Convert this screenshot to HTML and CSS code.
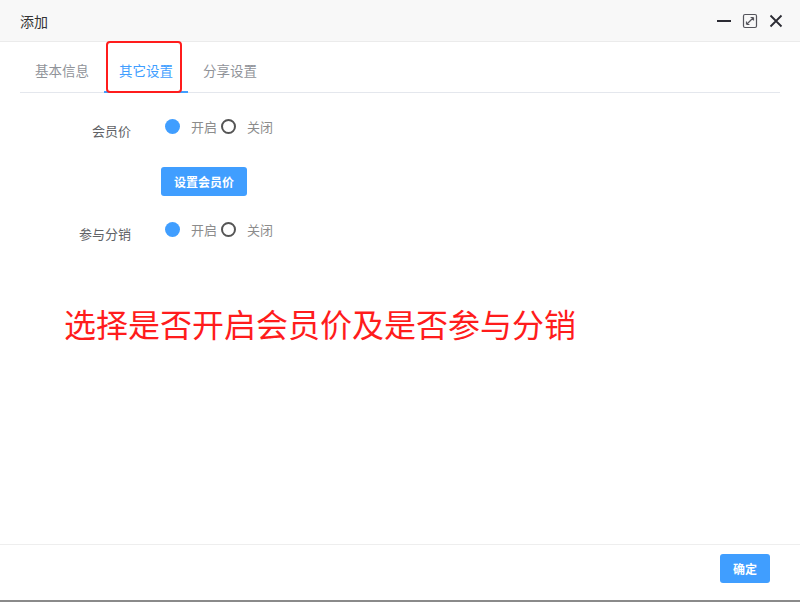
FILE: index.html
```html
<!DOCTYPE html>
<html lang="zh">
<head>
<meta charset="utf-8">
<title>添加</title>
<link rel="stylesheet" href="styles.css">
</head>
<body>
<div class="dialog">
  <div class="header">
    <span class="title">添加</span>
    <div class="tools">
      <svg class="ico" width="16" height="16" viewBox="0 0 16 16"><rect x="1" y="7" width="14" height="2" fill="#2b2b33"/></svg>
      <svg class="ico" width="16" height="16" viewBox="0 0 16 16"><rect x="1.5" y="1.5" width="13" height="13" rx="1.5" fill="none" stroke="#55555c" stroke-width="1.2"/><path d="M4.5 11.5 L11.5 4.5 M4.5 11.5 L4.5 8.6 M4.5 11.5 L7.4 11.5 M11.5 4.5 L8.6 4.5 M11.5 4.5 L11.5 7.4" fill="none" stroke="#55555c" stroke-width="1.2"/></svg>
      <svg class="ico" width="16" height="16" viewBox="0 0 16 16"><path d="M2.5 2.5 L13.5 13.5 M13.5 2.5 L2.5 13.5" stroke="#2b2b33" stroke-width="1.8"/></svg>
    </div>
  </div>
  <div class="body">
    <div class="tabs">
      <div class="tab">基本信息</div>
      <div class="tab active">其它设置</div>
      <div class="tab">分享设置</div>
      <div class="mark"></div>
    </div>
    <div class="form">
      <div class="row">
        <div class="label">会员价</div>
        <div class="radios">
          <span class="dot on"></span><span class="rtext">开启</span>
          <span class="dot off"></span><span class="rtext">关闭</span>
        </div>
      </div>
      <div class="row btnrow">
        <div class="label"></div>
        <button class="btn">设置会员价</button>
      </div>
      <div class="row">
        <div class="label">参与分销</div>
        <div class="radios">
          <span class="dot on"></span><span class="rtext">开启</span>
          <span class="dot off"></span><span class="rtext">关闭</span>
        </div>
      </div>
    </div>
    <div class="note">选择是否开启会员价及是否参与分销</div>
  </div>
  <div class="footer">
    <button class="btn ok">确定</button>
  </div>
</div>
</body>
</html>
```

FILE: styles.css
```css
* { box-sizing: border-box; }
html, body { margin: 0; padding: 0; }
body {
  width: 800px;
  height: 602px;
  overflow: hidden;
  background: #fff;
  font-family: "Noto Sans CJK SC", "Noto Sans", sans-serif;
}
.dialog {
  height: 602px;
  display: flex;
  flex-direction: column;
  border-bottom: 2px solid #8a8a8a;
}
.header {
  height: 42px;
  flex: none;
  background: #f8f8f8;
  border-bottom: 1px solid #ebebeb;
  display: flex;
  align-items: center;
  justify-content: space-between;
  padding: 0 16px 0 20px;
}
.title {
  font-size: 14px;
  color: #333;
}
.tools {
  display: flex;
  gap: 10px;
  align-items: center;
  padding-top: 1px;
}
.ico { display: block; }
.body {
  flex: 1;
  padding: 0 20px;
}
.tabs {
  position: relative;
  display: flex;
  margin-top: 9px;
  border-bottom: 1px solid #e4e7ed;
  height: 42px;
}
.tab {
  width: 84px;
  height: 41px;
  line-height: 39px;
  text-align: center;
  font-size: 13.5px;
  color: #909399;
}
.tab.active {
  color: #409eff;
  border-bottom: 2px solid #409eff;
  height: 42px;
}
.mark {
  position: absolute;
  left: 86px;
  top: -10px;
  width: 76px;
  height: 52px;
  border: 2px solid #ff1c1c;
  border-radius: 4px;
}
.form {
  padding-top: 18px;
  display: flex;
  flex-direction: column;
}
.row {
  display: flex;
  align-items: flex-start;
}
.row + .row { margin-top: 16px; }
.row.btnrow + .row { margin-top: 18px; }
.label {
  width: 123px;
  flex: none;
  text-align: right;
  padding-right: 12px;
  font-size: 13px;
  line-height: 40px;
  color: #606266;
}
.btnrow .label { width: 141px; line-height: 29px; }
.radios {
  display: flex;
  align-items: center;
  height: 30px;
  padding-left: 22px;
}
.dot {
  width: 15px;
  height: 15px;
  border-radius: 50%;
  flex: none;
}
.dot.on { background: #409eff; }
.dot.off { border: 2px solid #555; margin-left: 4px; }
.rtext {
  font-size: 13px;
  color: #8c8c8c;
  margin-left: 11px;
}
.btn {
  font-family: inherit;
  border: none;
  background: #409eff;
  color: #fff;
  font-size: 12px;
  font-weight: bold;
  height: 29px;
  padding: 0 13px;
  border-radius: 3px;
}
.note {
  margin-top: 49px;
  padding-left: 44px;
  font-size: 32px;
  line-height: 40px;
  color: #ff1c1c;
}
.footer {
  height: 56px;
  flex: none;
  border-top: 1px solid #eee;
  display: flex;
  justify-content: flex-end;
  align-items: flex-start;
  padding: 9px 30px 0 0;
}
.btn.ok { width: 50px; padding: 0; }
```
